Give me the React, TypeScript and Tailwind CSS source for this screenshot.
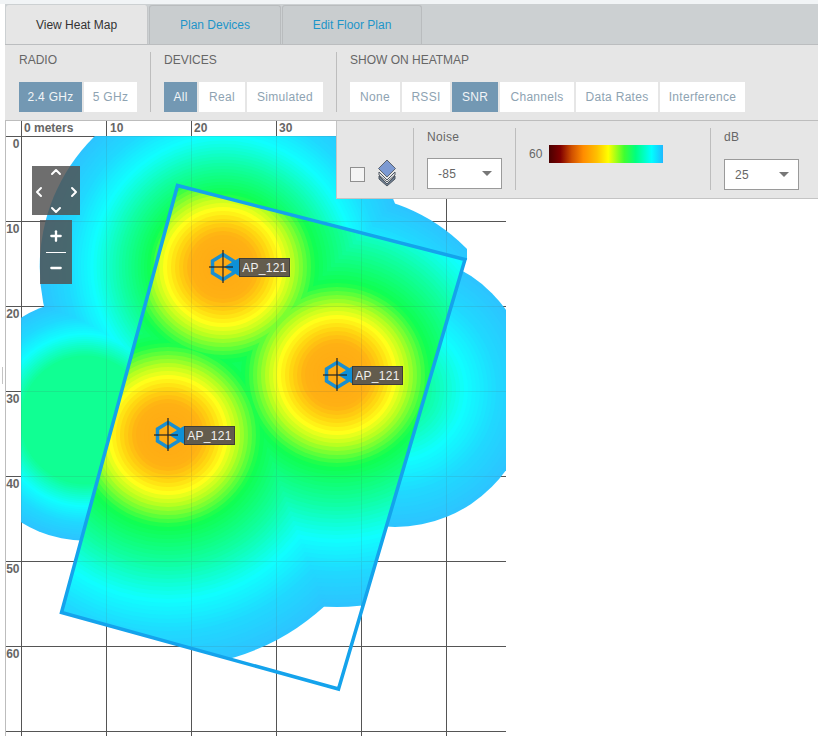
import React from 'react';
import { ChevronDown, ChevronLeft, ChevronRight, ChevronUp, Minus, Plus } from 'lucide-react';

const STOPS: [number, string][] = [
  [0, '#ffa814'],
  [34, '#ffb014'],
  [46, '#ffd010'],
  [60, '#ffff1a'],
  [72, '#b8ff20'],
  [94, '#10ff50'],
  [130, '#10ffa0'],
  [150, '#10ffd4'],
  [167, '#10ffff'],
  [200, '#20d8ff'],
  [232, '#2cc4ff'],
];

const hex = (c: string) => [1, 3, 5].map((i) => parseInt(c.slice(i, i + 2), 16));

// colour of the heat map at a given distance from an access point
const colorAt = (r: number) => {
  for (let i = 1; i < STOPS.length; i++) {
    const [r0, c0] = STOPS[i - 1];
    const [r1, c1] = STOPS[i];
    if (r <= r1) {
      const t = (r - r0) / (r1 - r0);
      const a = hex(c0);
      const b = hex(c1);
      return `rgb(${a.map((v, k) => Math.round(v + (b[k] - v) * t)).join(',')})`;
    }
  }
  return STOPS[STOPS.length - 1][1];
};

const BANDS: number[] = [];
for (let r = 232; r > 0; r -= 4) BANDS.push(r);

const APS = [
  { x: 223, y: 267 },
  { x: 337, y: 375 },
  { x: 168, y: 435 },
];

const WALL = '177.5,185.5 465,259.5 338.5,689 61.5,612.5';
const V_LINES = [21.5, 106.5, 191.5, 276.5, 361.5, 446.5];
const H_LINES = [136.5, 221.5, 306.5, 391.5, 476.5, 561.5, 646.5, 731.5];
const Y_LABELS = [0, 10, 20, 30, 40, 50, 60];

const Grid: React.FC<{ opacity?: number }> = ({ opacity = 1 }) => (
  <g stroke="#555" strokeWidth="1" opacity={opacity}>
    {V_LINES.map((x) => (
      <line key={x} x1={x} y1="121" x2={x} y2="736" />
    ))}
    {H_LINES.map((y) => (
      <line key={y} x1="5" y1={y} x2="506" y2={y} />
    ))}
  </g>
);

const HeatMap = () => (
  <svg viewBox="0 121 818 615" className="block w-[818px] h-[615px]">
    <defs>
      <clipPath id="map">
        <rect x="21" y="136" width="485" height="600" />
      </clipPath>
      <clipPath id="inside">
        <polygon points={WALL} />
      </clipPath>
      <clipPath id="outside">
        <path clipRule="evenodd" d="M0 0H818V736H0Z M177.5 185.5L465 259.5L338.5 689L61.5 612.5Z" />
      </clipPath>
      <clipPath id="above">
        <polygon points="0,139 467,260 467,0 0,0" />
      </clipPath>
    </defs>

    <Grid />

    <g clipPath="url(#map)">
      <g clipPath="url(#outside)">
        {BANDS.map((r) => (
          <g key={r} fill={colorAt(r)}>
            {r > 120 && <circle cx="85" cy="420" r={r * 0.52} />}
            {r > 95 && <circle cx="395" cy="390" r={r - 95} />}
            <circle cx={APS[0].x} cy={APS[0].y} r={r * 0.79} />
            <circle cx={APS[1].x} cy={APS[1].y} r={r * 0.78} clipPath="url(#above)" />
          </g>
        ))}
      </g>
      <g clipPath="url(#inside)">
        {BANDS.map((r) => (
          <g key={r} fill={colorAt(r)}>
            {APS.map((ap) => (
              <circle key={ap.x} cx={ap.x} cy={ap.y} r={r} />
            ))}
          </g>
        ))}
      </g>
      <Grid opacity={0.12} />
    </g>

    <polygon points={WALL} fill="none" stroke="#14a3ec" strokeWidth="3.5" />

    <g fontFamily="'Liberation Sans', Arial, sans-serif" fontSize="12" fontWeight="700" fill="#666">
      <text x="24" y="132">0 meters</text>
      <text x="110" y="132">10</text>
      <text x="194" y="132">20</text>
      <text x="279" y="132">30</text>
      {Y_LABELS.map((n, i) => (
        <text key={n} x="19.5" y={148 + i * 85} textAnchor="end">{n}</text>
      ))}
    </g>

    {APS.map((ap) => (
      <g key={ap.x} transform={`translate(${ap.x} ${ap.y})`}>
        <polygon points="0,-12.5 10.5,-6 10.5,6 0,12.5 -10.5,6 -10.5,-6" fill="none" stroke="#1a8fd0" strokeWidth="3.5" />
        <polygon points="1,0 16,-9 16,9" fill="#0e90d8" />
        <line x1="-14" y1="0" x2="10" y2="0" stroke="#222" strokeWidth="1.2" />
        <line x1="0" y1="-17" x2="0" y2="16" stroke="#222" strokeWidth="1.2" />
      </g>
    ))}
  </svg>
);

const ApLabel: React.FC<{ className: string }> = ({ className }) => (
  <div className={`absolute h-[19px] w-[51px] flex items-center justify-center bg-[#635c4d] border border-[#3f3d38] text-[12px] text-[#f0f0f0] tracking-[.3px] ${className}`}>
    AP_121
  </div>
);

const Toggle: React.FC<{ label: string; width: string; active?: boolean }> = ({ label, width, active }) => (
  <div className={`h-[30px] ${width} flex items-center justify-center text-[12px] tracking-[.3px] ${active ? 'bg-[#7398b3] text-[#f2f5f7]' : 'bg-white text-[#8ea3b2]'}`}>
    {label}
  </div>
);

const Tab: React.FC<{ label: string; width: string; active?: boolean }> = ({ label, width, active }) => (
  <div
    className={`${width} flex items-center justify-center rounded-t-[3px] border-r text-[12px] ${
      active
        ? 'h-[39px] bg-[#e6e6e6] border-[#c4c6c8] text-[#333]'
        : 'h-[39px] bg-[#c9cdcf] border-[#b9bcbe] border-t border-l text-[#1d95c9]'
    }`}
  >
    {label}
  </div>
);

const Select: React.FC<{ value: string; height: string }> = ({ value, height }) => (
  <div className={`${height} w-[75px] bg-white border border-[#9a9a9a] flex items-center justify-between pl-[10px] pr-[9px] text-[12px] tracking-[.3px] text-[#666]`}>
    {value}
    <span className="w-0 h-0 border-x-[5px] border-x-transparent border-t-[5px] border-t-[#777]" />
  </div>
);

const LayersIcon = () => (
  <svg width="20" height="28" viewBox="0 0 20 28" className="mb-[-5px]">
    <path d="M2 17 L10 25 L18 17 L18 20 L10 27 L2 20 Z" fill="#6f7f92" stroke="#4e5660" strokeWidth="1" strokeLinejoin="round" />
    <path d="M2 13 L10 21 L18 13 L18 16 L10 23 L2 16 Z" fill="#e8e8e8" stroke="#4e5660" strokeWidth="1" strokeLinejoin="round" />
    <path d="M10 1 L18.5 9.5 L10 18 L1.5 9.5 Z" fill="#7d9ad2" stroke="#5c6470" strokeWidth="1" strokeLinejoin="round" />
  </svg>
);

export default function App() {
  return (
    <div className="w-[818px] h-[736px] overflow-hidden bg-white flex flex-col font-['Liberation_Sans',Arial,sans-serif]">
      <div className="h-1 bg-[#f1f4f6] shrink-0" />

      <div className="ml-[5px] h-[41px] shrink-0 bg-[#ccd0d2] border-b border-[#bbbdbf] flex items-end pl-px gap-px">
        <Tab label="View Heat Map" width="w-[142px]" active />
        <Tab label="Plan Devices" width="w-[132px]" />
        <Tab label="Edit Floor Plan" width="w-[140px]" />
      </div>

      <div className="ml-[5px] h-[76px] shrink-0 bg-[#e6e6e6] border-b border-[#bdbdbd] pl-[14px] pt-[7px] flex items-start text-[#666]">
        <div className="w-[132px] h-[60px] border-r border-[#bdbdbd] flex flex-col justify-between">
          <span className="text-[12px] leading-[16px]">RADIO</span>
          <div className="flex gap-[2px]">
            <Toggle label="2.4 GHz" width="w-[63px]" active />
            <Toggle label="5 GHz" width="w-[53px]" />
          </div>
        </div>
        <div className="w-[186px] h-[60px] pl-[13px] border-r border-[#bdbdbd] flex flex-col justify-between">
          <span className="text-[12px] leading-[16px]">DEVICES</span>
          <div className="flex gap-[2px]">
            <Toggle label="All" width="w-[33px]" active />
            <Toggle label="Real" width="w-[46px]" />
            <Toggle label="Simulated" width="w-[76px]" />
          </div>
        </div>
        <div className="h-[60px] pl-[13px] flex flex-col justify-between">
          <span className="text-[12px] leading-[16px]">SHOW ON HEATMAP</span>
          <div className="flex gap-[2px]">
            <Toggle label="None" width="w-[50px]" />
            <Toggle label="RSSI" width="w-[48px]" />
            <Toggle label="SNR" width="w-[46px]" active />
            <Toggle label="Channels" width="w-[74px]" />
            <Toggle label="Data Rates" width="w-[82px]" />
            <Toggle label="Interference" width="w-[85px]" />
          </div>
        </div>
      </div>

      <div className="relative flex-1">
        <HeatMap />

        <div className="absolute left-[5px] top-0 bottom-0 w-px bg-[#bdbdbd]" />
        <div className="absolute left-[2px] top-[246px] w-px h-[17px] bg-[#c4c4c4]" />

        <div className="absolute left-[32px] top-[45px] w-[48px] h-[49px] bg-[#505050]/[.83] grid grid-cols-[13px_22px_13px] grid-rows-[12px_27px_10px] place-items-center text-white">
          <ChevronUp size={16} strokeWidth={3} className="col-start-2 row-start-1" />
          <ChevronLeft size={16} strokeWidth={3} className="col-start-1 row-start-2" />
          <ChevronRight size={16} strokeWidth={3} className="col-start-3 row-start-2" />
          <ChevronDown size={16} strokeWidth={3} className="col-start-2 row-start-3" />
        </div>

        <div className="absolute left-[40px] top-[99px] w-[32px] h-[64px] bg-[#505050]/[.83] flex flex-col items-center justify-between py-[8px] text-white">
          <Plus size={16} strokeWidth={3.5} />
          <div className="w-[20px] h-px bg-white" />
          <Minus size={16} strokeWidth={3.5} />
        </div>

        <ApLabel className="left-[239px] top-[137px]" />
        <ApLabel className="left-[352px] top-[245px]" />
        <ApLabel className="left-[184px] top-[305px]" />

        <div className="absolute left-[336px] top-0 right-0 h-[78px] bg-[#e6e6e6] border-b border-l border-[#c4c4c4] flex items-start text-[#666] text-[12px]">
          <div className="mt-[7px] h-[62px] w-[77px] pl-[13px] pb-[8px] border-r border-[#bdbdbd] flex items-end gap-[12px]">
            <div className="w-[15px] h-[15px] bg-[#f4f4f4] border border-[#8f8f8f]" />
            <LayersIcon />
          </div>
          <div className="mt-[7px] h-[62px] w-[102px] pl-[13px] pt-[2px] border-r border-[#bdbdbd] flex flex-col gap-[14px]">
            <span className="leading-[14px] tracking-[.3px]">Noise</span>
            <Select value="-85" height="h-[31px]" />
          </div>
          <div className="mt-[7px] h-[62px] w-[195px] pl-[13px] pt-[17px] border-r border-[#bdbdbd] flex items-start gap-[7px]">
            <span className="leading-[18px]">60</span>
            <div className="w-[114px] h-[18px] bg-[linear-gradient(90deg,#4a0000_0%,#800000_10%,#d05000_20%,#ff8c00_30%,#ffc000_42%,#ffff00_52%,#40ff30_66%,#00ff80_76%,#00ffff_90%,#20b8ff_100%)]" />
          </div>
          <div className="mt-[7px] h-[62px] pl-[13px] pt-[2px] flex flex-col gap-[15px]">
            <span className="leading-[14px] tracking-[.3px]">dB</span>
            <Select value="25" height="h-[31px]" />
          </div>
        </div>
      </div>
    </div>
  );
}
